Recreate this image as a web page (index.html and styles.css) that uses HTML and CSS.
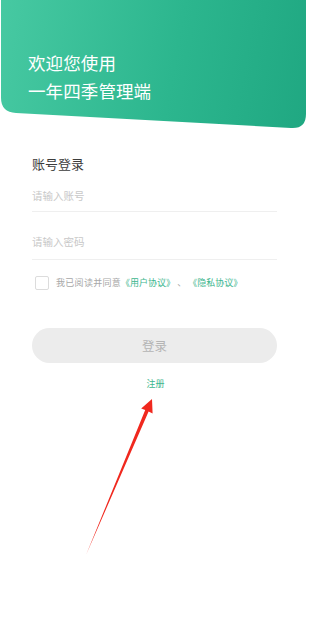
FILE: index.html
```html
<!DOCTYPE html>
<html lang="zh-CN">
<head>
<meta charset="utf-8">
<title>登录</title>
<link rel="stylesheet" href="styles.css">
</head>
<body>
<div class="page">
  <header class="hero">
    <div class="hero-line">欢迎您使用</div>
    <div class="hero-line">一年四季管理端</div>
  </header>
  <main class="form">
    <div class="form-title">账号登录</div>
    <div class="field field-first">请输入账号</div>
    <div class="field field-second">请输入密码</div>
    <div class="agree">
      <span class="checkbox"></span>
      <span class="agree-text">我已阅读并同意</span>
      <span class="link">《用户协议》</span>
      <span class="sep">、</span>
      <span class="link">《隐私协议》</span>
    </div>
    <div class="btn">登录</div>
    <div class="register">注册</div>
  </main>
  <svg class="arrow" width="314" height="637" viewBox="0 0 314 637">
    <polygon points="152,399 141.2,408.6 145.2,410 86,555 148.6,411.6 152.6,413.4" fill="#f0281e"/>
  </svg>
</div>
</body>
</html>
```
FILE: styles.css
```css
html, body {
  margin: 0;
  padding: 0;
  background: #ffffff;
}
body {
  font-family: "Noto Sans CJK SC", "Noto Sans", sans-serif;
  width: 314px;
  height: 637px;
  overflow: hidden;
}
.page {
  position: relative;
  width: 314px;
  height: 637px;
}
.hero {
  height: 130px;
  box-sizing: border-box;
  padding: 49px 0 0 28px;
  background: linear-gradient(100deg, #47c9a2 0%, #2cb68e 55%, #1fa781 100%);
  clip-path: path('M1,0 H306 V114 Q306,129 291,128 L16,113 Q1,112 1,98 Z');
  color: #ffffff;
}
.hero-line {
  font-size: 17.5px;
  line-height: 28px;
  letter-spacing: 0.1px;
}
.form {
  padding: 0 37px 0 32px;
}
.form-title {
  margin-top: 25px;
  font-size: 13px;
  line-height: 18px;
  color: #3c3c3c;
}
.field {
  font-size: 10.5px;
  line-height: 15px;
  color: #c8c8c8;
  border-bottom: 1px solid #efefef;
}
.field-first {
  padding: 15px 0 8px;
}
.field-second {
  padding: 22px 0 10px;
}
.agree {
  display: flex;
  align-items: center;
  margin-top: 16px;
  padding-left: 3px;
  font-size: 9px;
  line-height: 14px;
  color: #a8a8a8;
}
.checkbox {
  width: 12px;
  height: 12px;
  border: 1px solid #dcdcdc;
  border-radius: 2px;
  margin-right: 7px;
}
.agree-text {
  letter-spacing: 0.3px;
}
.link {
  color: #3cb68e;
}
.sep {
  margin: 0 2px;
}
.btn {
  margin-top: 38px;
  height: 35px;
  border-radius: 18px;
  background: #ececec;
  color: #b4b4b4;
  font-size: 12.5px;
  display: flex;
  align-items: center;
  justify-content: center;
}
.register {
  margin-top: 15px;
  text-align: center;
  font-size: 9px;
  line-height: 12px;
  color: #3cb68e;
  padding-left: 2px;
}
.arrow {
  position: absolute;
  left: 0;
  top: 0;
  pointer-events: none;
}
```
